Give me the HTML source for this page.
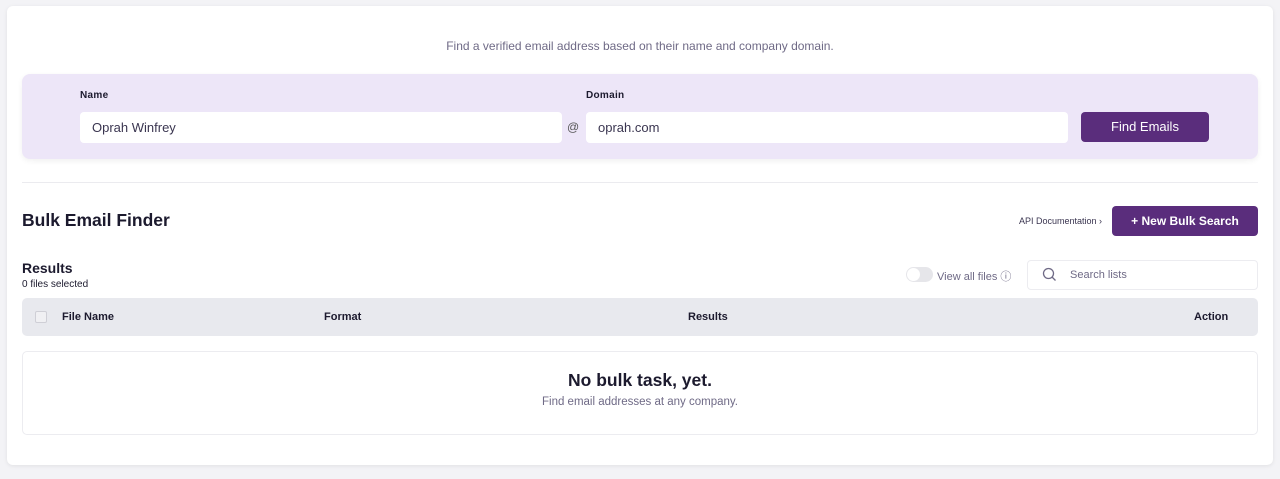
<!DOCTYPE html>
<html><head><style>
*{box-sizing:border-box;margin:0;padding:0}
body{width:1280px;height:479px;background:#f3f3f6;font-family:"Liberation Sans",sans-serif;position:relative;overflow:hidden;color:#1c1a2e}
.card{position:absolute;left:7px;top:6px;width:1266px;height:459px;background:#fff;border-radius:6px;box-shadow:0 1px 4px rgba(0,0,0,.08)}
.abs{position:absolute}
.lav{left:22px;top:74px;width:1236px;height:85px;background:#ede6f8;border-radius:8px;box-shadow:0 2px 6px rgba(0,0,0,.06)}
.inp{background:#fff;border-radius:4px;height:31px;font-size:13px;color:#3a3550;padding:8px 12px}
.btn{background:#5a2d7c;color:#fff;border-radius:4px;font-size:13px;text-align:center}
.th{font-size:11px;font-weight:bold;color:#1c1a2e;top:311px}
</style></head><body>
<div class="card"></div>
<div class="abs" style="left:0;width:1280px;top:39px;text-align:center;font-size:12px;color:#6f6a86">Find a verified email address based on their name and company domain.</div>
<div class="abs lav"></div>
<div class="abs" style="left:80px;top:90px;font-size:10px;font-weight:bold;letter-spacing:.3px">Name</div>
<div class="abs" style="left:586px;top:90px;font-size:10px;font-weight:bold;letter-spacing:.3px">Domain</div>
<div class="abs inp" style="left:80px;top:112px;width:482px">Oprah Winfrey</div>
<div class="abs" style="left:567px;top:120px;font-size:12px;color:#555">@</div>
<div class="abs inp" style="left:586px;top:112px;width:482px">oprah.com</div>
<div class="abs btn" style="left:1081px;top:112px;width:128px;height:30px;line-height:30px">Find Emails</div>
<div class="abs" style="left:22px;top:182px;width:1236px;height:1px;background:#ebebef"></div>
<div class="abs" style="left:22px;top:210px;font-size:17.5px;font-weight:bold">Bulk Email Finder</div>
<div class="abs" style="left:1019px;top:216px;font-size:9px;color:#3a3550">API Documentation ›</div>
<div class="abs btn" style="left:1112px;top:206px;width:146px;height:30px;line-height:30px;font-weight:bold;font-size:12px">+ New Bulk Search</div>
<div class="abs" style="left:22px;top:260px;font-size:14px;font-weight:bold">Results</div>
<div class="abs" style="left:22px;top:279px;font-size:10px">0 files selected</div>
<div class="abs" style="left:906px;top:267px;width:27px;height:15px;border-radius:8px;background:#e6e6ea"><div style="width:13px;height:13px;border-radius:50%;background:#fff;margin:1px"></div></div>
<div class="abs" style="left:937px;top:268px;font-size:11px;color:#6f6a86">View all files ⓘ</div>
<div class="abs" style="left:1027px;top:260px;width:231px;height:30px;border:1px solid #ececf0;border-radius:4px"></div>
<svg class="abs" style="left:1042px;top:267px" width="15" height="15" viewBox="0 0 15 15"><circle cx="6.5" cy="6.5" r="5" fill="none" stroke="#6f6a86" stroke-width="1.3"/><line x1="10" y1="10" x2="13.5" y2="13.5" stroke="#6f6a86" stroke-width="1.3"/></svg>
<div class="abs" style="left:1070px;top:269px;font-size:11px;color:#6f6a86">Search lists</div>
<div class="abs" style="left:22px;top:298px;width:1236px;height:38px;background:#e8e9ee;border-radius:5px"></div>
<div class="abs" style="left:35px;top:311px;width:12px;height:12px;border:1px solid #cfcfd6;border-radius:2px;background:#f0f0f3"></div>
<div class="abs th" style="left:62px">File Name</div>
<div class="abs th" style="left:324px">Format</div>
<div class="abs th" style="left:688px">Results</div>
<div class="abs th" style="left:1194px">Action</div>
<div class="abs" style="left:22px;top:351px;width:1236px;height:84px;border:1px solid #ececf0;border-radius:5px"></div>
<div class="abs" style="left:0;width:1280px;top:370px;text-align:center;font-size:17.5px;font-weight:bold">No bulk task, yet.</div>
<div class="abs" style="left:0;width:1280px;top:396px;text-align:center;font-size:11.5px;color:#6f6a86">Find email addresses at any company.</div>
</body></html>
